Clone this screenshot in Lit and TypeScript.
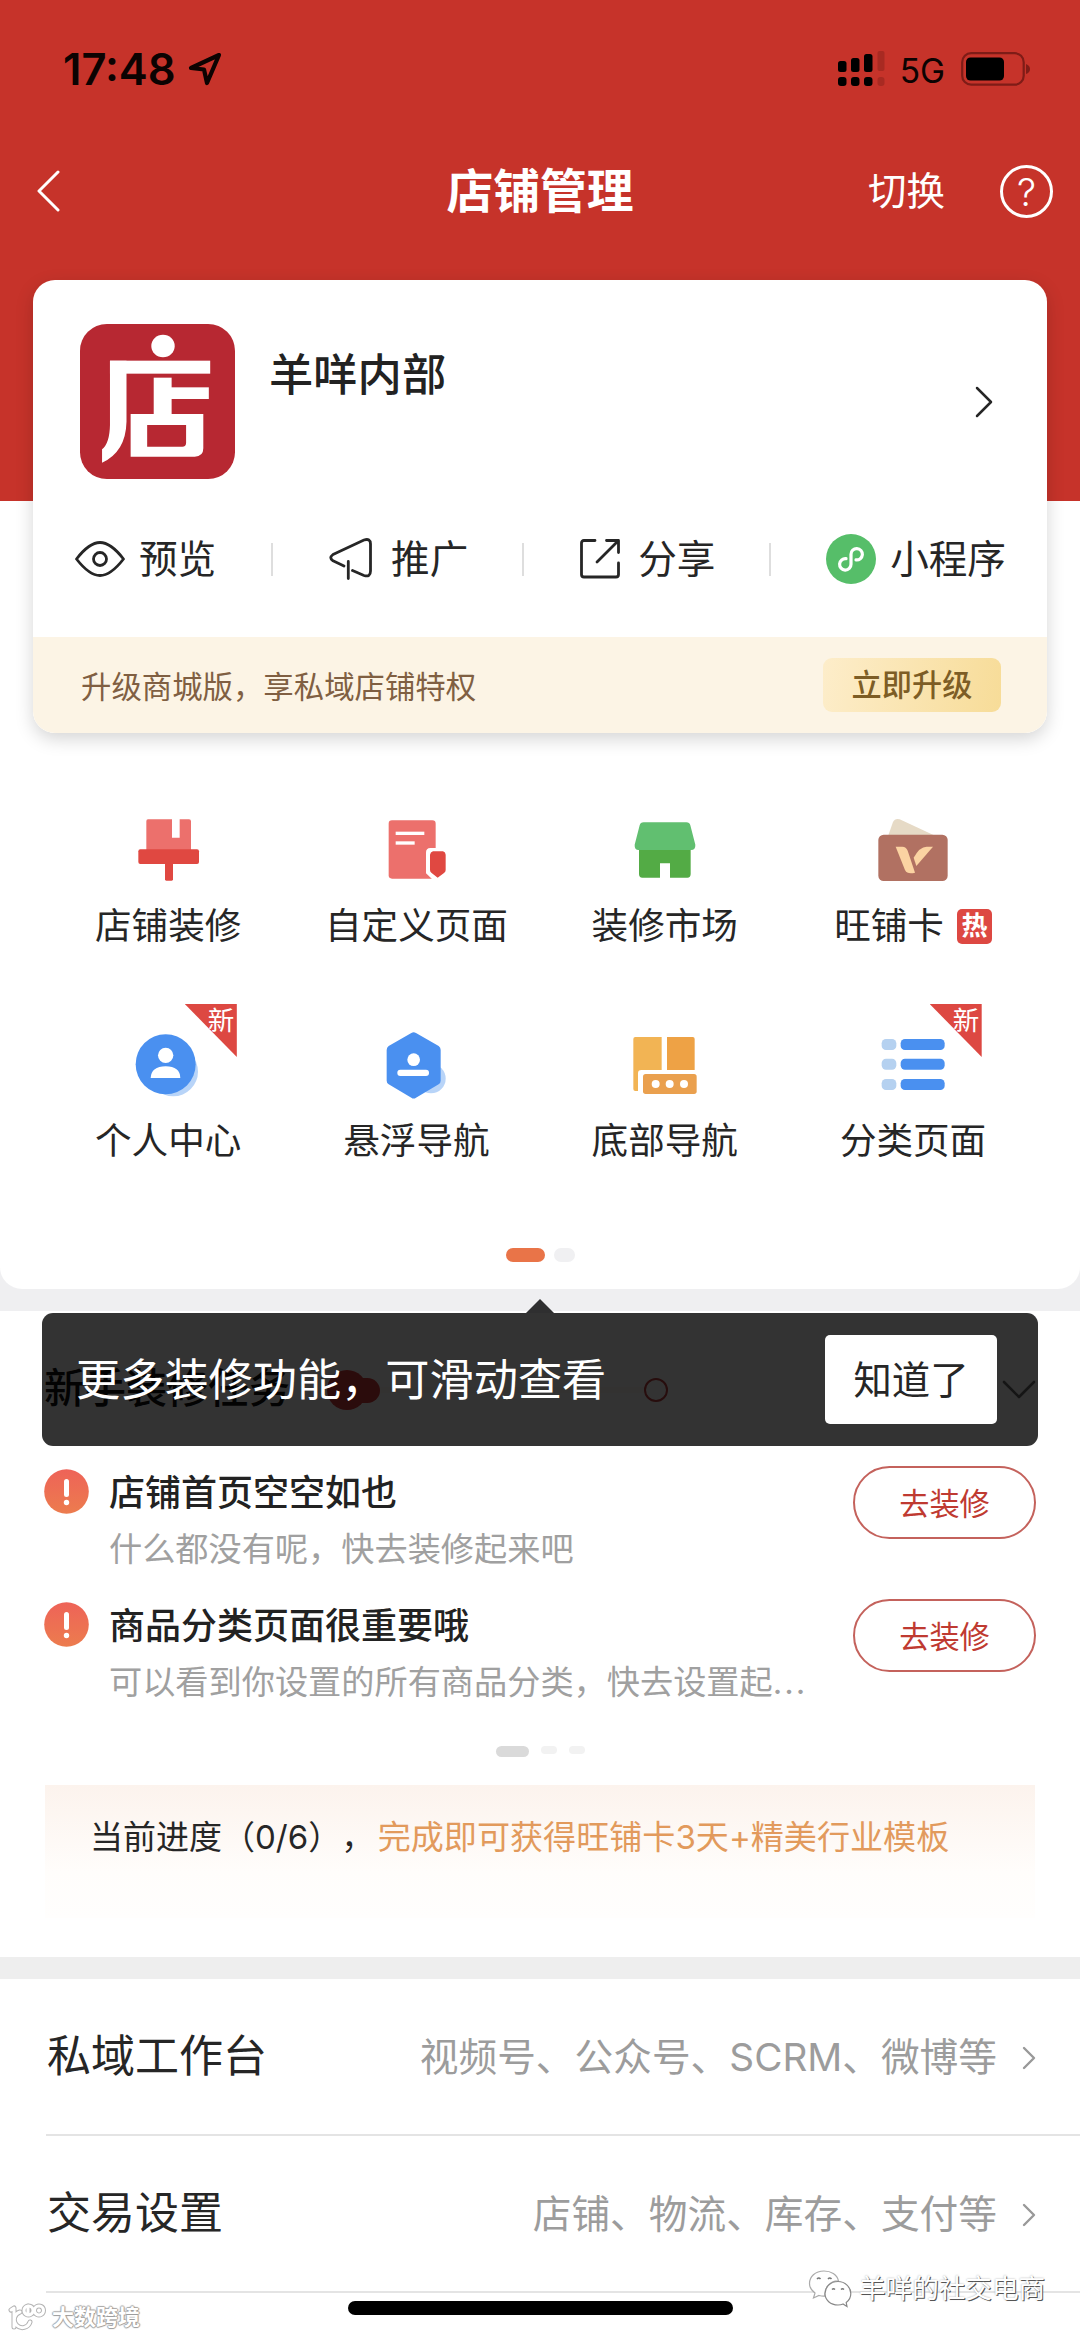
import { LitElement, html, svg, css, nothing } from "lit";
import { customElement, property } from "lit/decorators.js";

const decorateIcon = svg`
  <path fill="#ec706c" d="M264 88H336V143H359V88H387Q393 88 393 94V180H259V94Q259 88 264 88Z"/>
  <rect x="235" y="178" width="182" height="44" rx="6" fill="#e04841"/>
  <path fill="#e04841" d="M315 220H339V268Q339 272 335 272H319Q315 272 315 268Z"/>`;

const customPageIcon = svg`
  <rect x="987" y="91" width="141" height="175" rx="10" fill="#ec706c"/>
  <rect x="1008" y="125" width="86" height="10" fill="#fff"/>
  <rect x="1008" y="154" width="57" height="10" fill="#fff"/>
  <path fill="#fff" d="M1099 188Q1099 174 1112 174H1140V270H1120L1099 250Z"/>
  <path fill="#e04841" d="M1120 184H1150Q1158 187 1158 194V240Q1158 246 1153 249L1134 263L1116 249Q1111 246 1111 240V194Q1112 187 1120 184Z"/>`;

const marketIcon = svg`
  <path fill="#53ab45" d="M234 170H389V252Q389 263 379 263H327V220H297V263H244Q234 263 234 252Z"/>
  <path fill="#61bf70" d="M248 97H376Q386 97 388 106L403 164Q404 180 390 180H233Q220 180 221 164L236 106Q238 97 248 97Z"/>`;

const walletIcon = svg`
  <path fill="#e6dac6" d="M983 136L997 96Q1003 84 1017 88L1120 136Z"/>
  <rect x="953" y="134" width="208" height="139" rx="16" fill="#b17162"/>
  <path fill="#fbd3a2" d="M1005 170H1025Q1036 170 1041 182L1063 248Q1040 254 1033 240Z"/>
  <path fill="#fbd3a2" d="M1059 203Q1077 170 1098 170H1117L1067 228Z"/>`;

const profileIcon = svg`
  <circle cx="340" cy="845" r="74" fill="#b8d4f8"/>
  <circle cx="317" cy="823" r="90" fill="#4a90f0"/>
  <circle cx="317" cy="796" r="23" fill="#fff"/>
  <path fill="#fff" d="M272 864Q274 829 317 829T361 864Z"/>`;

const floatNavIcon = svg`
  <circle cx="1114" cy="866" r="44" fill="#b8d4f8"/>
  <path fill="#4a90f0" d="M1055 729Q1062 724 1069 729L1137 768Q1143 772 1143 780V872Q1143 879 1137 883L1069 923Q1062 928 1055 923L987 883Q981 879 981 872V780Q981 772 987 768Z"/>
  <circle cx="1062" cy="809" r="19" fill="#fff"/>
  <rect x="1013" y="839" width="95" height="19" rx="9" fill="#fff"/>`;

const bottomNavIcon = svg`
  <path fill="#f2b454" d="M223 741H302V840H241Q231 840 231 850V903H223Q217 903 217 897V747Q217 741 223 741Z"/>
  <path fill="#eea245" d="M318 741H395Q401 741 401 747V840H318Z"/>
  <rect x="246" y="852" width="161" height="60" rx="8" fill="#eaa04e"/>
  <circle cx="284" cy="882" r="12" fill="#fff"/>
  <circle cx="326" cy="882" r="12" fill="#fff"/>
  <circle cx="369" cy="882" r="12" fill="#fff"/>`;

const categoryIcon = svg`
  ${[747, 806, 867].map(
    (y) => svg`
      <rect x="963" y=${y} width="44" height="33" rx="13" fill="#b5d1f0"/>
      <rect x="1020" y=${y} width="132" height="33" rx="13" fill="#4a90f0"/>`
  )}`;

interface Tool {
  label: string;
  view: string;
  art: unknown;
  hot?: boolean;
  fresh?: boolean;
}

const TOOLS: Tool[] = [
  { label: "店铺装修", view: "216 72 216 216", art: decorateIcon },
  { label: "自定义页面", view: "961 72 216 216", art: customPageIcon },
  { label: "装修市场", view: "204 72 216 216", art: marketIcon },
  { label: "旺铺卡", view: "949 72 216 216", art: walletIcon, hot: true },
  { label: "个人中心", view: "216 717 216 216", art: profileIcon, fresh: true },
  { label: "悬浮导航", view: "961 717 216 216", art: floatNavIcon },
  { label: "底部导航", view: "204 717 216 216", art: bottomNavIcon },
  { label: "分类页面", view: "949 717 216 216", art: categoryIcon, fresh: true },
];

@customElement("tool-tile")
export class ToolTile extends LitElement {
  @property({ attribute: false }) tool!: Tool;

  static styles = css`
    :host {
      display: flex;
      flex-direction: column;
      align-items: center;
      position: relative;
      height: 191px;
      padding-top: 24px;
    }
    .art {
      width: 72px;
      height: 72px;
    }
    .label {
      display: flex;
      align-items: center;
      gap: 13px;
      margin-top: 15px;
      line-height: 50px;
      font-size: 36.6px;
      color: #262626;
      white-space: nowrap;
    }
    .hot {
      width: 35px;
      height: 35px;
      border-radius: 5px;
      background: #dd4842;
      color: #fff;
      font-size: 26px;
      font-weight: 700;
      line-height: 34px;
      text-align: center;
    }
    .ribbon {
      position: absolute;
      top: -1px;
      right: 55.5px;
      width: 52px;
      height: 53px;
      background: #dd4842;
      clip-path: polygon(0 0, 100% 0, 100% 100%);
    }
    .fresh {
      position: absolute;
      top: 0;
      right: 58px;
      font-size: 26.5px;
      line-height: 30px;
      color: #fff;
    }
  `;

  render() {
    const t = this.tool;
    return html`
      <svg class="art" viewBox=${t.view}>${t.art}</svg>
      <div class="label">
        <span>${t.label}</span>
        ${t.hot ? html`<span class="hot">热</span>` : nothing}
      </div>
      ${t.fresh ? html`<i class="ribbon"></i><span class="fresh">新</span>` : nothing}
    `;
  }
}

@customElement("app-root")
export class AppRoot extends LitElement {
  static styles = css`
    :host {
      display: block;
      position: relative;
      width: 1080px;
      height: 2337px;
      overflow: hidden;
      background: #fff;
      color: #262626;
      font-family: Inter, "Noto Sans CJK SC", sans-serif;
      text-spacing-trim: space-all;
    }
    svg {
      display: block;
      flex: none;
    }
    .line {
      fill: none;
      stroke: currentColor;
      stroke-linecap: round;
      stroke-linejoin: round;
    }
    .shell {
      height: 1311px;
      background: #efeff1;
    }
    .top {
      box-sizing: border-box;
      height: 1289px;
      border-radius: 0 0 22px 22px;
      background: linear-gradient(#c6332a 501px, #fff 501px);
      overflow: hidden;
    }

    .status {
      display: flex;
      align-items: center;
      height: 138px;
      padding: 0 49px 0 63px;
      color: #0c0302;
    }
    .clock {
      font-size: 43.5px;
      font-weight: 600;
      width: 125px;
    }
    .fill {
      flex: 1;
    }
    .net {
      font-size: 33.5px;
      line-height: 40px;
      margin: 3px 16px 0 15px;
    }

    .nav {
      display: grid;
      grid-template-columns: 1fr auto 1fr;
      align-items: center;
      height: 106px;
      padding: 0 27px;
      margin-bottom: 36px;
      color: #fff;
    }
    .back {
      margin-left: 9px;
    }
    .title {
      font-size: 46.8px;
      font-weight: 700;
      line-height: 60px;
    }
    .navright {
      display: flex;
      justify-content: flex-end;
      align-items: center;
      gap: 55px;
      font-size: 38.5px;
    }
    .switch {
      line-height: 50px;
      margin-bottom: 1px;
    }
    .help {
      box-sizing: border-box;
      width: 53px;
      height: 53px;
      border: 3px solid #fff;
      border-radius: 50%;
      font-size: 38px;
      font-weight: 300;
      line-height: 48px;
      text-align: center;
    }

    .cardwrap {
      width: 1014px;
      margin: 0 33px;
      border-radius: 22px;
      box-shadow: 0 6px 18px rgba(0, 0, 0, 0.17);
    }
    .card {
      height: 453px;
      border-radius: 22px;
      background: #fff;
      overflow: hidden;
    }
    .shop {
      display: flex;
      height: 155px;
      padding: 44px 54px 0 47px;
    }
    .shopname {
      flex: 1;
      margin: 23px 0 0 34px;
      font-size: 44.3px;
      font-weight: 500;
      line-height: 56px;
      color: #222;
    }
    .go {
      align-self: center;
    }
    .actions {
      display: flex;
      justify-content: space-between;
      align-items: center;
      box-sizing: border-box;
      height: 158px;
      padding: 2px 41px 0 42px;
      font-size: 38.6px;
      line-height: 50px;
    }
    .action {
      display: flex;
      align-items: center;
      gap: 14px;
    }
    .wide {
      gap: 18px;
      margin-left: 1px;
      margin-right: -1px;
    }
    .bar {
      width: 2px;
      height: 33px;
      background: #dedede;
    }
    .banner {
      display: flex;
      justify-content: space-between;
      align-items: center;
      height: 96px;
      padding: 0 46px 0 48px;
      background: #fcf4e5;
      color: #805f42;
      font-size: 30.4px;
    }
    .banner-text {
      line-height: 40px;
      padding-top: 3px;
    }
    .upgrade {
      width: 178px;
      height: 54px;
      border-radius: 9px;
      background: linear-gradient(100deg, #fdedca, #f7dc98);
      color: #7d5d25;
      font-weight: 500;
      font-size: 30.2px;
      line-height: 54px;
      text-align: center;
    }

    .tools {
      display: grid;
      grid-template-columns: repeat(4, 248.3px);
      margin: 57px 43px 0 44px;
    }
    .pager {
      display: flex;
      justify-content: center;
      gap: 9px;
      margin-top: 28px;
    }
    .pager i {
      width: 21px;
      height: 14px;
      border-radius: 7px;
      background: #f0f0f2;
    }
    .pager .on {
      width: 39px;
      background: #e97448;
    }

    .guide {
      height: 646px;
      padding: 0 44px;
    }
    .guidehead {
      display: flex;
      align-items: center;
      height: 158px;
      font-size: 41px;
      font-weight: 500;
      color: #111;
    }
    .guidetitle {
      line-height: 60px;
      margin-bottom: 5px;
    }
    .down {
      color: #6a6a6a;
    }
    .streak {
      display: flex;
      align-items: center;
      margin-left: 37px;
    }
    .knob {
      width: 40px;
      height: 40px;
      border-radius: 50%;
      background: #d83c3c;
    }
    .reach {
      width: 26px;
      height: 25px;
      margin-left: -13px;
      border-radius: 0 13px 13px 0;
      background: #d83c3c;
    }
    .track {
      width: 264px;
      height: 6px;
      background: #fdf8f4;
    }
    .ring {
      box-sizing: border-box;
      width: 24px;
      height: 24px;
      border: 2.5px solid #c04040;
      border-radius: 50%;
    }
    .task {
      display: flex;
      height: 133px;
    }
    .taskbody {
      flex: 1;
      padding-left: 20px;
      white-space: nowrap;
    }
    .tasktitle {
      font-size: 36px;
      font-weight: 500;
      line-height: 48px;
      color: #222;
    }
    .tasksub {
      margin-top: 12px;
      font-size: 33.2px;
      line-height: 40px;
      color: #a0a0a0;
    }
    .more {
      letter-spacing: 2px;
    }
    .do {
      box-sizing: border-box;
      width: 183px;
      height: 73px;
      margin-top: -3px;
      border: 2px solid #c4625c;
      border-radius: 37px;
      color: #bf3a31;
      font-size: 30.2px;
      line-height: 72px;
      text-align: center;
    }
    .steps {
      display: flex;
      gap: 12px;
      height: 11px;
      margin: 11px 0 28px 452px;
    }
    .steps i {
      width: 16px;
      height: 8px;
      border-radius: 4px;
      background: #f2f2f2;
    }
    .steps .on {
      width: 33px;
      height: 11px;
      border-radius: 6px;
      background: #dadada;
    }
    .promo {
      height: 133px;
      margin: 0 1px;
      padding-left: 45px;
      background: linear-gradient(#fcf3ed, #fffdfb 65%, #fffefd);
      font-size: 33px;
      line-height: 104px;
      white-space: nowrap;
    }
    .reward {
      margin-left: 3.5px;
      font-size: 33.1px;
      color: #e29a5c;
    }
    .band {
      height: 22px;
      background: #eee;
    }

    .entry {
      display: flex;
      align-items: center;
      box-sizing: border-box;
      height: 157px;
      margin-left: 46px;
      padding: 3px 44px 0 1px;
      border-bottom: 2px solid #e4e4e4;
    }
    .entry-title {
      flex: 1;
      margin-bottom: 4px;
      font-size: 44px;
      line-height: 60px;
    }
    .entry-note {
      margin: 0 25px 3px 0;
      font-size: 38.7px;
      line-height: 60px;
      color: #9c9c9c;
    }
    .dim {
      color: #999;
    }

    .tip {
      position: absolute;
      left: 42px;
      top: 1313px;
      display: flex;
      justify-content: space-between;
      align-items: center;
      box-sizing: border-box;
      width: 996px;
      height: 133px;
      padding: 0 41px 0 34px;
      border-radius: 11px;
      background: rgba(0, 0, 0, 0.8);
      color: #fff;
      font-size: 44.2px;
    }
    .tip::before {
      content: "";
      position: absolute;
      left: 484px;
      top: -14px;
      width: 28px;
      height: 14px;
      background: #2f2f30;
      clip-path: polygon(50% 0, 100% 100%, 0 100%);
    }
    .tiptext {
      line-height: 60px;
      margin-top: 1px;
    }
    .ok {
      width: 172px;
      height: 89px;
      border-radius: 5px;
      background: #fff;
      color: #262626;
      font-size: 38.4px;
      line-height: 90px;
      text-align: center;
    }
    .home {
      position: absolute;
      left: 348px;
      top: 2301px;
      width: 385px;
      height: 14px;
      border-radius: 7px;
      background: #000;
    }
    .mark {
      position: absolute;
      display: flex;
      align-items: center;
      white-space: nowrap;
      color: #fff;
    }
    .mark-left {
      left: 8px;
      top: 2301px;
      gap: 4px;
      font-size: 22px;
      font-weight: 700;
      line-height: 32px;
      text-shadow: 1px 0 1px #999, -1px 0 1px #aaa, 0 1px 1px #999, 0 -1px 1px #aaa;
    }
    .mark-right {
      left: 808px;
      top: 2269px;
      gap: 7px;
      font-size: 26.6px;
      line-height: 39px;
      text-shadow: 1px 1px 0 #555, 0 0 2px #aaa;
    }
  `;

  private task(title: string, sub: unknown) {
    return html`
      <div class="task">
        <svg width="45" height="45" viewBox="0 0 45 45">
          <defs>
            <linearGradient id="warn" x1="0" y1="0" x2="0" y2="1">
              <stop offset="0" stop-color="#ee6358" />
              <stop offset="1" stop-color="#ec7c4e" />
            </linearGradient>
          </defs>
          <circle cx="22.5" cy="22.5" r="22.3" fill="url(#warn)" />
          <rect x="20" y="10" width="5" height="18" rx="2.5" fill="#fff" />
          <circle cx="22.5" cy="33.5" r="2.7" fill="#fff" />
        </svg>
        <div class="taskbody">
          <div class="tasktitle">${title}</div>
          <div class="tasksub">${sub}</div>
        </div>
        <div class="do">去装修</div>
      </div>
    `;
  }

  private entry(title: string, note: string) {
    return html`
      <div class="entry">
        <span class="entry-title">${title}</span>
        <span class="entry-note">${note}</span>
        <svg class="dim" width="14" height="24" viewBox="0 0 14 24">
          <path class="line" stroke-width="2.4" d="M2 2L12 12L2 22" />
        </svg>
      </div>
    `;
  }

  render() {
    return html`
      <div class="shell">
        <div class="top">
          <div class="status">
            <span class="clock">17:48</span>
            <svg width="34" height="34" viewBox="0 0 34 34">
              <path class="line" stroke-width="4.2" d="M31 3L3 16L16 17.500L19 31Z" />
            </svg>
            <span class="fill"></span>
            <svg width="47" height="36" viewBox="0 0 47 36">
              <rect x="0" y="10" width="8.5" height="11" rx="2.5" />
              <rect x="13" y="7" width="8.5" height="14" rx="2.5" />
              <rect x="26" y="3" width="8.5" height="18" rx="2.5" />
              <rect x="39.5" y="0" width="7" height="20" rx="2" fill="#a82a22" />
              <rect x="0" y="26" width="8.5" height="9" rx="3" />
              <rect x="13" y="26" width="8.5" height="9" rx="3" />
              <rect x="26" y="26" width="8.5" height="9" rx="3" />
              <rect x="39.5" y="26" width="7" height="9" rx="3" fill="#a82a22" />
            </svg>
            <span class="net">5G</span>
            <svg width="70" height="34" viewBox="0 0 70 34">
              <rect x="1.2" y="1.2" width="61.5" height="31.5" rx="9" fill="none" stroke="#7f1c17" stroke-width="2.2" />
              <rect x="5" y="5.5" width="38" height="23" rx="4.5" />
              <path d="M65 12Q69 13.500 69 17T65 22Z" fill="#7f1c17" />
            </svg>
          </div>

          <div class="nav">
            <svg class="back" width="24" height="42" viewBox="0 0 24 42">
              <path class="line" stroke-width="3" d="M22 2L3 21L22 40" />
            </svg>
            <span class="title">店铺管理</span>
            <div class="navright">
              <span class="switch">切换</span>
              <span class="help">?</span>
            </div>
          </div>

          <div class="cardwrap">
            <div class="card">
              <div class="shop">
                <svg width="155" height="155" viewBox="233 162 450 465" preserveAspectRatio="none">
                  <rect x="233" y="162" width="450" height="465" rx="78" ry="80" fill="#b72832" />
                  <circle cx="474" cy="228" r="34" fill="#fff" />
                  <rect x="320" y="272" width="291" height="39" fill="#fff" />
                  <path fill="#fff" d="M320 272H368V455Q366 545 297 578V538Q319 520 320 465Z" />
                  <rect x="447" y="323" width="52" height="120" fill="#fff" />
                  <rect x="495" y="352" width="112" height="35" fill="#fff" />
                  <path
                    fill="#fff"
                    fill-rule="evenodd"
                    d="M380 432H591V535Q591 560 566 560H380ZM428 465V530H530Q541 530 541 519V465Z"
                  />
                </svg>
                <span class="shopname">羊咩内部</span>
                <svg class="go" width="18" height="32" viewBox="0 0 18 32">
                  <path class="line" stroke-width="2.5" d="M2 2L16 16L2 30" />
                </svg>
              </div>

              <div class="actions">
                <div class="action">
                  <svg width="50" height="36" viewBox="0 0 50 36">
                    <path class="line" stroke-width="2.8" d="M1.500 18C10 7 17 1.500 25 1.500S40 7 48.500 18C40 29 33 34.500 25 34.500S10 29 1.500 18Z" />
                    <circle class="line" stroke-width="2.8" cx="25" cy="18" r="6.500" />
                  </svg>
                  <span>预览</span>
                </div>
                <i class="bar"></i>
                <div class="action wide">
                  <svg width="44" height="42" viewBox="0 0 44 42">
                    <path class="line" stroke-width="2.8" d="M15 28L4 22.800Q-.500 20 4 16.500L35 2Q41.500 0 41.500 6V33Q41.500 39.500 35 37.500L23.500 32.500M19.300 23.500V40.500" />
                  </svg>
                  <span>推广</span>
                </div>
                <i class="bar"></i>
                <div class="action wide">
                  <svg width="40" height="40" viewBox="0 0 40 40">
                    <path class="line" stroke-width="2.8" d="M15 1.500H4Q1.500 1.500 1.500 4V35.500Q1.500 38 4 38H36Q38.500 38 38.500 35.500V24M26.500 1.500H38.500V13.500M38 2L17 23" />
                  </svg>
                  <span>分享</span>
                </div>
                <i class="bar"></i>
                <div class="action">
                  <svg width="50" height="50" viewBox="-25 -25 50 50">
                    <circle r="25" fill="#56be69" />
                    <path
                      fill="none"
                      stroke="#fff"
                      stroke-width="3.2"
                      stroke-linecap="round"
                      d="M-5 -.300A5.700 5.700 0 1 0 0 5.300V-4.700A5.700 5.700 0 1 1 5 .900"
                    />
                  </svg>
                  <span>小程序</span>
                </div>
              </div>

              <div class="banner">
                <span class="banner-text">升级商城版，享私域店铺特权</span>
                <span class="upgrade">立即升级</span>
              </div>
            </div>
          </div>

          <div class="tools">
            ${TOOLS.map((t) => html`<tool-tile .tool=${t}></tool-tile>`)}
          </div>
          <div class="pager"><i class="on"></i><i></i></div>
        </div>
      </div>

      <div class="guide">
        <div class="guidehead">
          <span class="guidetitle">新手装修任务</span>
          <div class="streak">
            <i class="knob"></i><i class="reach"></i><i class="track"></i><i class="ring"></i>
          </div>
          <span class="fill"></span>
          <svg class="down" width="34" height="20" viewBox="0 0 34 20">
            <path class="line" stroke-width="2.6" d="M2 2L17 17L32 2" />
          </svg>
        </div>
        ${this.task("店铺首页空空如也", "什么都没有呢，快去装修起来吧")}
        ${this.task(
          "商品分类页面很重要哦",
          html`可以看到你设置的所有商品分类，快去设置起<span class="more">...</span>`
        )}
        <div class="steps"><i class="on"></i><i></i><i></i></div>
        <div class="promo">当前进度（0/6），<span class="reward">完成即可获得旺铺卡3天+精美行业模板</span></div>
      </div>
      <div class="band"></div>

      ${this.entry("私域工作台", "视频号、公众号、SCRM、微博等")}
      ${this.entry("交易设置", "店铺、物流、库存、支付等")}

      <div class="tip">
        <span class="tiptext">更多装修功能，可滑动查看</span>
        <span class="ok">知道了</span>
      </div>

      <div class="home"></div>
      <div class="mark mark-left">
        <svg width="40" height="30" viewBox="0 0 40 30">
          <g fill="none" stroke-linecap="round" stroke-linejoin="round">
            <path stroke="#b4b4b4" stroke-width="5" d="M3 8L6 6V25M12 10A8 8 0 1 0 22 20M20 4V12M25 8.500A4.500 4.500 0 1 1 25 8.400M35.500 8.500A4.500 4.500 0 1 1 35.500 8.400" />
            <path stroke="#fff" stroke-width="3" d="M3 8L6 6V25M12 10A8 8 0 1 0 22 20M20 4V12M25 8.500A4.500 4.500 0 1 1 25 8.400M35.500 8.500A4.500 4.500 0 1 1 35.500 8.400" />
          </g>
        </svg>
        <span>大数跨境</span>
      </div>
      <div class="mark mark-right">
        <svg width="44" height="39" viewBox="0 0 44 39">
          <path fill="#fff" stroke="#aaa" stroke-width="1.2" d="M16 2C7 2 1.500 8 1.500 14.500C1.500 18.500 3.500 21.500 7 24L5.500 29L11 26.500Q15 27.500 17 27C16 18 23 11.500 30.500 11.800C29 5.500 23 2 16 2Z" />
          <path fill="#fff" stroke="#888" stroke-width="1.200" d="M30 12.500C22.500 12.500 17 18 17 24.500S22.500 36 30 36Q33 36 35 35L39 37.500L38.200 33.500C41 31.500 42.800 28 42.800 24.500C42.800 18 37 12.500 30 12.500Z" />
          <path fill="none" stroke="#777" stroke-width="1.500" d="M9 10Q10.800 8 12.500 10M20 10Q21.800 8 23.500 10M24 20.500Q25.500 19 27 20.500M33 20.500Q34.500 19 36 20.500" />
        </svg>
        <span>羊咩的社交电商</span>
      </div>
    `;
  }
}
